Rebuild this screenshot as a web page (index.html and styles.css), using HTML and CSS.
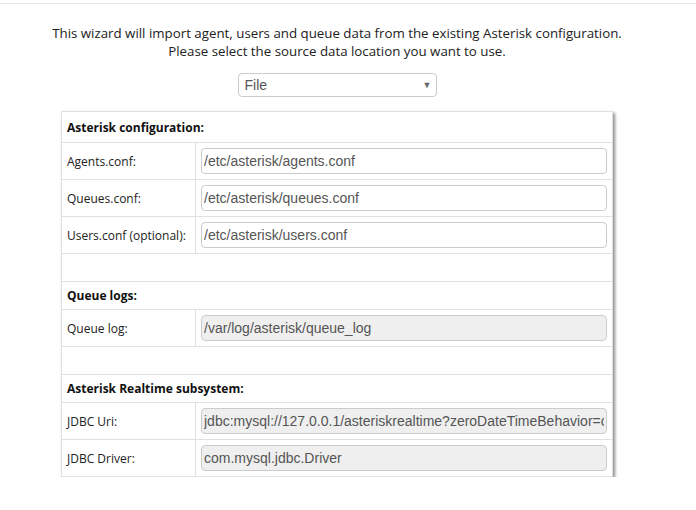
FILE: index.html
```html
<!DOCTYPE html>
<html>
<head>
<meta charset="utf-8">
<link rel="stylesheet" href="styles.css">
</head>
<body>
<div class="topbar"></div>
<div class="page">
  <p class="intro">This wizard will import agent, users and queue data from the existing Asterisk configuration.<br>Please select the source data location you want to use.</p>
  <div class="select"><span class="select-value">File</span><span class="select-arrow">&#9660;</span></div>
  <table class="config">
    <tr class="head first"><td colspan="2">Asterisk configuration:</td></tr>
    <tr class="field"><td class="label">Agents.conf:</td><td class="value"><input class="inp" type="text" value="/etc/asterisk/agents.conf"></td></tr>
    <tr class="field"><td class="label">Queues.conf:</td><td class="value"><input class="inp" type="text" value="/etc/asterisk/queues.conf"></td></tr>
    <tr class="field"><td class="label">Users.conf (optional):</td><td class="value"><input class="inp" type="text" value="/etc/asterisk/users.conf"></td></tr>
    <tr class="spacer"><td colspan="2"></td></tr>
    <tr class="head"><td colspan="2">Queue logs:</td></tr>
    <tr class="field"><td class="label">Queue log:</td><td class="value"><input class="inp dis" type="text" value="/var/log/asterisk/queue_log" readonly></td></tr>
    <tr class="spacer"><td colspan="2"></td></tr>
    <tr class="head"><td colspan="2">Asterisk Realtime subsystem:</td></tr>
    <tr class="field"><td class="label">JDBC Uri:</td><td class="value"><input class="inp dis" type="text" value="jdbc:mysql://127.0.0.1/asteriskrealtime?zeroDateTimeBehavior=convertToNull" readonly></td></tr>
    <tr class="field"><td class="label">JDBC Driver:</td><td class="value"><input class="inp dis" type="text" value="com.mysql.jdbc.Driver" readonly></td></tr>
  </table>
</div>
</body>
</html>
```

FILE: styles.css
```css
html, body {
  margin: 0;
  padding: 0;
  background: #fff;
}
body {
  font-family: "Open Sans", "Liberation Sans", sans-serif;
  font-size: 12px;
  color: #222;
}
.topbar {
  height: 3px;
  border-bottom: 1px solid #e8e8e8;
}
.page {
  width: 674px;
  display: flex;
  flex-direction: column;
  align-items: center;
}
.intro {
  margin: 20px 0 0 0;
  text-align: center;
  font-size: 13.3px;
  line-height: 18px;
  color: #222;
}
.select {
  margin-top: 13px;
  box-sizing: border-box;
  width: 199px;
  height: 24px;
  border: 1px solid #ccc;
  border-radius: 4px;
  display: flex;
  align-items: center;
  justify-content: space-between;
  padding: 0 4px 0 6px;
  font-family: "Liberation Sans", Arial, sans-serif;
  font-size: 14px;
  color: #555;
}
.select-arrow {
  font-size: 9px;
  color: #666;
}
.config {
  margin-top: 14px;
  width: 552px;
  border-collapse: collapse;
  border: 1px solid #dcdcdc;
  box-shadow: 2px 2px 3px rgba(0, 0, 0, 0.45);
}
.config td {
  border: 1px solid #e0e0e0;
  padding: 0 5px;
  vertical-align: middle;
}
.head td {
  height: 27px;
  font-weight: bold;
  color: #111;
}
.head.first td {
  height: 30px;
}
.spacer td {
  height: 27px;
}
.field td {
  height: 36px;
}
.label {
  width: 123px;
  white-space: nowrap;
  color: #222;
}
.value {
  padding: 0 5px;
}
.inp {
  display: block;
  box-sizing: border-box;
  width: 100%;
  height: 26px;
  margin: 0;
  border: 1px solid #ccc;
  border-radius: 4px;
  padding: 0 2px;
  font-family: "Liberation Sans", Arial, sans-serif;
  font-size: 14px;
  color: #555;
  background: #fff;
  outline: none;
}
.inp.dis {
  background: #efefef;
}
```
